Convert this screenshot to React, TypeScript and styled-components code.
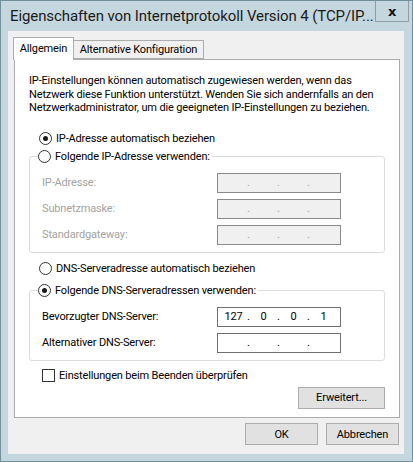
import { FC, Fragment } from "react";
import styled, { createGlobalStyle } from "styled-components";

const GlobalStyle = createGlobalStyle`
    html, body {
        margin: 0;
        padding: 0;
        background: #c5d7de;
    }

    body {
        font-family: Roboto, "Noto Sans", "DejaVu Sans", sans-serif;
        font-size: 11px;
        letter-spacing: -0.15px;
        color: #000;
    }
`;

const Window = styled.div`
    box-sizing: border-box;
    width: 413px;
    height: 462px;
    display: flex;
    flex-direction: column;
    background: #c5d7de;
    border: 1px solid #71909c;
`;

const TitleBar = styled.div`
    height: 30px;
    display: flex;
    align-items: flex-start;
`;

const Title = styled.div`
    flex: 1;
    min-width: 0;
    padding: 5px 0 0 9px;
    font-size: 15px;
    letter-spacing: -0.1px;
    line-height: 20px;
    color: #1a1a1a;
    white-space: nowrap;
    overflow: hidden;
`;

const CloseButton = styled.div`
    box-sizing: border-box;
    flex: none;
    width: 34px;
    height: 21px;
    margin-right: 3px;
    border: 1px solid #8d9ea6;
    border-top: none;
    display: flex;
    align-items: center;
    justify-content: center;
    font-family: "DejaVu Sans", sans-serif;
    font-size: 13px;
    font-weight: bold;
    color: #111;
`;

const Client = styled.div`
    flex: 1;
    margin: 0 8px 7px 7px;
    padding-top: 6px;
    background: #f0f0f0;
    display: flex;
    flex-direction: column;
`;

const TabList = styled.div`
    display: flex;
    align-items: flex-end;
    padding-left: 5px;
    height: 23px;
    position: relative;
    z-index: 1;
`;

const Tab = styled.div<{ $active?: boolean; $width: number }>`
    box-sizing: border-box;
    width: ${({ $width }) => $width}px;
    height: ${({ $active }) => ($active ? "23px" : "19px")};
    margin-bottom: ${({ $active }) => ($active ? "0" : "1px")};
    padding-top: ${({ $active }) => ($active ? "2px" : "0")};
    border: 1px solid #acacac;
    border-bottom: ${({ $active }) => ($active ? "none" : "1px solid #acacac")};
    border-left: ${({ $active }) => ($active ? "1px solid #acacac" : "none")};
    background: ${({ $active }) => ($active ? "#fff" : "#f0f0f0")};
    line-height: 17px;
    text-align: center;
    white-space: nowrap;
`;

const Panel = styled.div`
    box-sizing: border-box;
    height: 359px;
    margin: -1px 4px 0 6px;
    padding: 14px 14px 0 14px;
    background: #fff;
    border: 1px solid #acacac;
    display: flex;
    flex-direction: column;
`;

const Intro = styled.p`
    margin: 0;
    line-height: 13.5px;
    white-space: nowrap;
`;

const OptionRow = styled.label<{ $top?: number; $indent?: number }>`
    display: flex;
    align-items: center;
    gap: 4px;
    height: 16px;
    margin-top: ${({ $top }) => $top ?? 0}px;
    margin-left: ${({ $indent }) => $indent ?? 10}px;
    white-space: nowrap;
`;

const RadioMark = styled.span<{ $checked?: boolean }>`
    box-sizing: border-box;
    width: 13px;
    height: 13px;
    border-radius: 50%;
    border: 1px solid #333;
    background: #fff;
    display: flex;
    align-items: center;
    justify-content: center;

    &::after {
        content: "";
        width: 5px;
        height: 5px;
        border-radius: 50%;
        background: #1a1a1a;
        display: ${({ $checked }) => ($checked ? "block" : "none")};
    }
`;

const CheckMark = styled.span`
    box-sizing: border-box;
    width: 13px;
    height: 13px;
    border: 1px solid #333;
    background: #fff;
`;

const Group = styled.fieldset<{ $top?: number }>`
    margin: ${({ $top }) => $top ?? 0}px 0 0 0;
    padding: 0;
    border: 1px solid #dcdcdc;
    border-radius: 3px;
    min-width: 0;
`;

const GroupLegend = styled.legend`
    margin-left: 8px;
    padding: 0 2px 0 0;
`;

const FieldGrid = styled.div<{ $disabled?: boolean }>`
    display: grid;
    grid-template-columns: 175px 124px;
    row-gap: 6px;
    padding: 8px 0 7px 12px;
    color: ${({ $disabled }) => ($disabled ? "#a3a3a3" : "#000")};
`;

const FieldLabel = styled.span`
    line-height: 20px;
    white-space: nowrap;
`;

const IpField = styled.div<{ $disabled?: boolean }>`
    box-sizing: border-box;
    height: 20px;
    padding-left: 2px;
    display: flex;
    align-items: center;
    border: 1px solid ${({ $disabled }) => ($disabled ? "#8a8a8a" : "#6f6f6f")};
    background: ${({ $disabled }) => ($disabled ? "#f0f0f0" : "#fff")};
    color: ${({ $disabled }) => ($disabled ? "#a3a3a3" : "#000")};
`;

const Octet = styled.span`
    width: 27px;
    text-align: center;
`;

const Dot = styled.span`
    width: 3px;
    text-align: center;
`;

const Button = styled.div<{ $width: number }>`
    box-sizing: border-box;
    width: ${({ $width }) => $width}px;
    height: 22px;
    display: flex;
    align-items: center;
    justify-content: center;
    background: #e1e1e1;
    border: 1px solid #adadad;
`;

const PanelActions = styled.div`
    display: flex;
    justify-content: flex-end;
    margin-top: 3px;
`;

const Footer = styled.div`
    display: flex;
    justify-content: flex-end;
    gap: 8px;
    padding: 5px 5px 0 0;
`;

type IpProps = { value?: string[]; disabled?: boolean };

const IpInput: FC<IpProps> = ({ value = ["", "", "", ""], disabled }) => (
    <IpField $disabled={disabled}>
        {value.map((part, i) => (
            <Fragment key={i}>
                <Octet>{part}</Octet>
                {i < 3 && <Dot>.</Dot>}
            </Fragment>
        ))}
    </IpField>
);

const App: FC = () => (
    <>
        <GlobalStyle />
        <Window>
            <TitleBar>
                <Title>Eigenschaften von Internetprotokoll Version 4 (TCP/IP...</Title>
                <CloseButton>x</CloseButton>
            </TitleBar>
            <Client>
                <TabList>
                    <Tab $active $width={61}>Allgemein</Tab>
                    <Tab $width={130}>Alternative Konfiguration</Tab>
                </TabList>
                <Panel>
                    <Intro>
                        IP-Einstellungen können automatisch zugewiesen werden, wenn das
                        <br />
                        Netzwerk diese Funktion unterstützt. Wenden Sie sich andernfalls an den
                        <br />
                        Netzwerkadministrator, um die geeigneten IP-Einstellungen zu beziehen.
                    </Intro>

                    <OptionRow $top={16}>
                        <RadioMark $checked />
                        IP-Adresse automatisch beziehen
                    </OptionRow>
                    <Group $top={2}>
                        <GroupLegend>
                            <OptionRow $indent={0}>
                                <RadioMark />
                                Folgende IP-Adresse verwenden:
                            </OptionRow>
                        </GroupLegend>
                        <FieldGrid $disabled>
                            <FieldLabel>IP-Adresse:</FieldLabel>
                            <IpInput disabled />
                            <FieldLabel>Subnetzmaske:</FieldLabel>
                            <IpInput disabled />
                            <FieldLabel>Standardgateway:</FieldLabel>
                            <IpInput disabled />
                        </FieldGrid>
                    </Group>

                    <OptionRow $top={8}>
                        <RadioMark />
                        DNS-Serveradresse automatisch beziehen
                    </OptionRow>
                    <Group $top={6}>
                        <GroupLegend>
                            <OptionRow $indent={0}>
                                <RadioMark $checked />
                                Folgende DNS-Serveradressen verwenden:
                            </OptionRow>
                        </GroupLegend>
                        <FieldGrid>
                            <FieldLabel>Bevorzugter DNS-Server:</FieldLabel>
                            <IpInput value={["127", "0", "0", "1"]} />
                            <FieldLabel>Alternativer DNS-Server:</FieldLabel>
                            <IpInput />
                        </FieldGrid>
                    </Group>

                    <OptionRow $top={7} $indent={13}>
                        <CheckMark />
                        Einstellungen beim Beenden überprüfen
                    </OptionRow>
                    <PanelActions>
                        <Button $width={87}>Erweitert...</Button>
                    </PanelActions>
                </Panel>
                <Footer>
                    <Button $width={73}>OK</Button>
                    <Button $width={73}>Abbrechen</Button>
                </Footer>
            </Client>
        </Window>
    </>
);

export default App;
